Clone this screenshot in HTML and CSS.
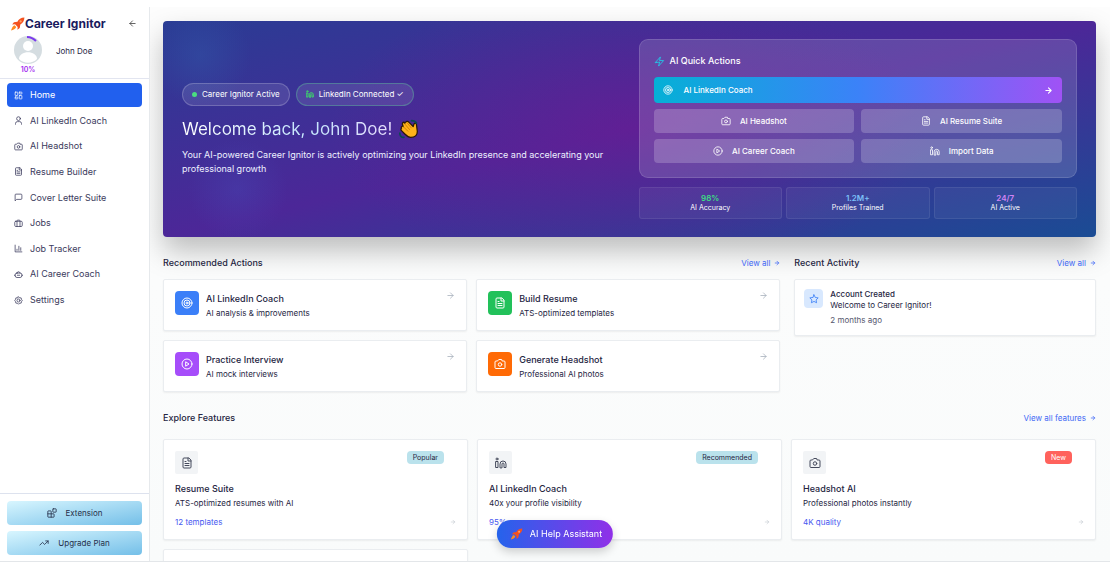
FILE: index.html
```html
<!DOCTYPE html>
<html lang="en">
<head>
    <meta charset="UTF-8">
    <meta name="viewport" content="width=device-width, initial-scale=1.0">
    <title>Career Ignitor</title>
    <link rel="stylesheet" href="styles.css">
</head>
<body>
    <!-- icons -->
    <svg class="sprite" aria-hidden="true">
        <symbol id="i-home" viewBox="0 0 24 24"><rect x="3" y="3" width="7" height="9" rx="1"/><rect x="14" y="3" width="7" height="5" rx="1"/><rect x="14" y="12" width="7" height="9" rx="1"/><rect x="3" y="16" width="7" height="5" rx="1"/></symbol>
        <symbol id="i-user" viewBox="0 0 24 24"><circle cx="12" cy="7" r="5"/><path d="M4 22v-2a5 5 0 0 1 5-5h6a5 5 0 0 1 5 5v2"/></symbol>
        <symbol id="i-camera" viewBox="0 0 24 24"><path d="M14.5 3h-5L7 6H4a2 2 0 0 0-2 2v11a2 2 0 0 0 2 2h16a2 2 0 0 0 2-2V8a2 2 0 0 0-2-2h-3z"/><circle cx="12" cy="13" r="3.500"/></symbol>
        <symbol id="i-file" viewBox="0 0 24 24"><path d="M15 2H6a2 2 0 0 0-2 2v16a2 2 0 0 0 2 2h12a2 2 0 0 0 2-2V7z"/><path d="M14 2v6h6M8 13h8M8 17h8M8 9h2"/></symbol>
        <symbol id="i-message" viewBox="0 0 24 24"><path d="M21 15a2 2 0 0 1-2 2H7l-4 4V5a2 2 0 0 1 2-2h14a2 2 0 0 1 2 2z"/></symbol>
        <symbol id="i-jobs" viewBox="0 0 24 24"><rect x="2" y="6" width="20" height="14" rx="3"/><path d="M8 20V5a2 2 0 0 1 2-2h4a2 2 0 0 1 2 2v15"/></symbol>
        <symbol id="i-chart" viewBox="0 0 24 24"><path d="M3 3v18h18M8 17v-3M13 17V6M18 17V10"/></symbol>
        <symbol id="i-bot" viewBox="0 0 24 24"><rect x="3" y="8" width="18" height="12" rx="5"/><path d="M8 8c0-5 8-5 8 0M1 14h2M21 14h2M9 14h6"/></symbol>
        <symbol id="i-settings" viewBox="0 0 24 24"><path d="M12 2l3 3 4 0 1 4 2 3-2 3-1 4-4 0-3 3-3-3-4 0-1-4-2-3 2-3 1-4 4 0z"/><circle cx="12" cy="12" r="4"/></symbol>
        <symbol id="i-blocks" viewBox="0 0 24 24"><rect x="14" y="2" width="8" height="8" rx="1"/><path d="M10 22V8a1 1 0 0 0-1-1H3a1 1 0 0 0-1 1v13a1 1 0 0 0 1 1h13a1 1 0 0 0 1-1v-6a1 1 0 0 0-1-1H2"/></symbol>
        <symbol id="i-trend" viewBox="0 0 24 24"><path d="M22 7l-8.500 8.500-5-5L2 17M16 7h6v6"/></symbol>
        <symbol id="i-left" viewBox="0 0 24 24"><path d="M12 19l-7-7 7-7M19 12H5"/></symbol>
        <symbol id="i-right" viewBox="0 0 24 24"><path d="M5 12h14M12 5l7 7-7 7"/></symbol>
        <symbol id="i-zap" viewBox="0 0 24 24"><path d="M3 14L14 2l-2 8h9L10 22l2-8z"/></symbol>
        <symbol id="i-target" viewBox="0 0 24 24"><circle cx="12" cy="12" r="10"/><circle cx="12" cy="12" r="6"/><circle cx="12" cy="12" r="2"/></symbol>
        <symbol id="i-play" viewBox="0 0 24 24"><circle cx="12" cy="12" r="10"/><path d="M10 8l6 4-6 4z"/></symbol>
        <symbol id="i-linkedin" viewBox="0 0 24 24"><path d="M2 9h4v12H2zM10 21v-7a6 6 0 0 1 12 0v7h-4v-7a2 2 0 0 0-4 0v7z"/><circle cx="4" cy="4" r="2"/></symbol>
        <symbol id="i-star" viewBox="0 0 24 24"><path d="M12 2l3.100 6.300 6.900 1-5 4.900 1.200 6.800L12 17.800 5.800 21 7 14.200 2 9.300l6.900-1z"/></symbol>
        <symbol id="i-rocket" viewBox="0 0 24 24"><path fill="#f4511e" stroke="none" d="M23 1c-6 0-10 3-12 7L5 9l-3 4 5-.5 4.500 4.500L11 22l4-3 1-6c4-3 7-6 7-12z"/><path fill="#ff8a1f" stroke="none" d="M6 14c-3 1-4 4-6 9 4-1 8-3 9-6z"/><circle cx="16.500" cy="7.500" r="2" fill="#ffa066" stroke="none"/></symbol>
    </svg>

    <div class="app">
        <aside class="sidebar">
            <div class="brand">
                <svg class="icon rocket"><use href="#i-rocket"/></svg>
                <span class="brand-name">Career Ignitor</span>
                <button class="collapse-btn" aria-label="Collapse sidebar"><svg class="icon"><use href="#i-left"/></svg></button>
            </div>
            <div class="profile">
                <div class="avatar">
                    <svg viewBox="0 0 28 28">
                        <circle cx="14" cy="14" r="14" fill="#d5dde1"/>
                        <circle cx="14" cy="10" r="5" fill="#fff"/>
                        <path d="M5 23c0-9 18-9 18 0-5 5-13 5-18 0z" fill="#fff"/>
                        <path d="M13 1a13 13 0 0 1 9 4" fill="none" stroke="#7c3aed" stroke-width="2"/>
                    </svg>
                    <span class="progress">10%</span>
                </div>
                <span class="user-name">John Doe</span>
            </div>
            <nav class="nav">
                <a href="#" class="active"><svg class="icon"><use href="#i-home"/></svg>Home</a>
                <a href="#"><svg class="icon"><use href="#i-user"/></svg>AI LinkedIn Coach</a>
                <a href="#"><svg class="icon"><use href="#i-camera"/></svg>AI Headshot</a>
                <a href="#"><svg class="icon"><use href="#i-file"/></svg>Resume Builder</a>
                <a href="#"><svg class="icon"><use href="#i-message"/></svg>Cover Letter Suite</a>
                <a href="#"><svg class="icon"><use href="#i-jobs"/></svg>Jobs</a>
                <a href="#"><svg class="icon"><use href="#i-chart"/></svg>Job Tracker</a>
                <a href="#"><svg class="icon"><use href="#i-bot"/></svg>AI Career Coach</a>
                <a href="#"><svg class="icon"><use href="#i-settings"/></svg>Settings</a>
            </nav>
            <div class="sidebar-footer">
                <button class="side-btn"><svg class="icon"><use href="#i-blocks"/></svg>Extension</button>
                <button class="side-btn"><svg class="icon"><use href="#i-trend"/></svg>Upgrade Plan</button>
            </div>
        </aside>

        <main class="main">
            <section class="hero">
                <div class="welcome">
                    <div class="pills">
                        <span class="pill"><span class="dot"></span>Career Ignitor Active</span>
                        <span class="pill pill-green"><svg class="icon"><use href="#i-linkedin"/></svg>LinkedIn Connected ✓</span>
                    </div>
                    <h1>
                        <span class="welcome-text">Welcome back, John Doe!</span>
                        <svg class="wave" viewBox="0 0 24 24">
                            <g stroke="#2b1a05" stroke-width="1.500" stroke-linejoin="round">
                                <path fill="#ffb31a" d="M3 11c-1-2 1-3 2-2L4 6c0-2 2-3 3-1l1-1c1-2 3-1 4 0l5 5 1-3c1-2 3-1 3 1l1 8c0 5-4 7-8 7-3 0-5-2-7-4l-4-4c-1-1-1-2 0-3z"/>
                                <path fill="none" stroke="#c97a00" stroke-width="1" d="M5 9l6 6M7 6l6 7M10 5l5 6"/>
                            </g>
                            <path fill="none" stroke="#0b4a50" stroke-width="2" stroke-linecap="round" d="M15 2c3 0 5 1 6 3M1 17c0 3 2 5 5 5"/>
                        </svg>
                    </h1>
                    <p>Your AI-powered Career Ignitor is actively optimizing your LinkedIn presence and accelerating your professional growth</p>
                </div>
                <div class="hero-side">
                    <div class="quick">
                        <h2><svg class="icon zap"><use href="#i-zap"/></svg>AI Quick Actions</h2>
                        <div class="quick-grid">
                            <button class="quick-main"><svg class="icon"><use href="#i-target"/></svg>AI LinkedIn Coach<svg class="icon end"><use href="#i-right"/></svg></button>
                            <button><svg class="icon"><use href="#i-camera"/></svg>AI Headshot</button>
                            <button><svg class="icon"><use href="#i-file"/></svg>AI Resume Suite</button>
                            <button><svg class="icon"><use href="#i-play"/></svg>AI Career Coach</button>
                            <button><svg class="icon"><use href="#i-linkedin"/></svg>Import Data</button>
                        </div>
                    </div>
                    <div class="stats">
                        <div class="stat"><strong class="green">98%</strong><span>AI Accuracy</span></div>
                        <div class="stat"><strong class="blue">1.2M+</strong><span>Profiles Trained</span></div>
                        <div class="stat"><strong class="pink">24/7</strong><span>AI Active</span></div>
                    </div>
                </div>
            </section>

            <div class="columns">
                <section class="recommended">
                    <div class="section-head">
                        <h2>Recommended Actions</h2>
                        <a href="#">View all <svg class="icon"><use href="#i-right"/></svg></a>
                    </div>
                    <div class="action-grid">
                        <a href="#" class="card action">
                            <span class="tile tile-blue"><svg class="icon"><use href="#i-target"/></svg></span>
                            <span class="action-text"><b>AI LinkedIn Coach</b><span>AI analysis &amp; improvements</span></span>
                            <svg class="icon arrow"><use href="#i-right"/></svg>
                        </a>
                        <a href="#" class="card action">
                            <span class="tile tile-green"><svg class="icon"><use href="#i-file"/></svg></span>
                            <span class="action-text"><b>Build Resume</b><span>ATS-optimized templates</span></span>
                            <svg class="icon arrow"><use href="#i-right"/></svg>
                        </a>
                        <a href="#" class="card action">
                            <span class="tile tile-purple"><svg class="icon"><use href="#i-play"/></svg></span>
                            <span class="action-text"><b>Practice Interview</b><span>AI mock interviews</span></span>
                            <svg class="icon arrow"><use href="#i-right"/></svg>
                        </a>
                        <a href="#" class="card action">
                            <span class="tile tile-orange"><svg class="icon"><use href="#i-camera"/></svg></span>
                            <span class="action-text"><b>Generate Headshot</b><span>Professional AI photos</span></span>
                            <svg class="icon arrow"><use href="#i-right"/></svg>
                        </a>
                    </div>
                </section>
                <section>
                    <div class="section-head">
                        <h2>Recent Activity</h2>
                        <a href="#">View all <svg class="icon"><use href="#i-right"/></svg></a>
                    </div>
                    <div class="card activity">
                        <span class="activity-icon"><svg class="icon"><use href="#i-star"/></svg></span>
                        <div>
                            <h3>Account Created</h3>
                            <p>Welcome to Career Ignitor!</p>
                            <time>2 months ago</time>
                        </div>
                    </div>
                </section>
            </div>

            <section class="explore">
                <div class="section-head">
                    <h2>Explore Features</h2>
                    <a href="#">View all features <svg class="icon"><use href="#i-right"/></svg></a>
                </div>
                <div class="feature-grid">
                    <article class="card feature">
                        <div class="feature-top">
                            <span class="feature-icon"><svg class="icon"><use href="#i-file"/></svg></span>
                            <span class="badge">Popular</span>
                        </div>
                        <h3>Resume Suite</h3>
                        <p>ATS-optimized resumes with AI</p>
                        <div class="feature-foot"><a href="#">12 templates</a><svg class="icon"><use href="#i-right"/></svg></div>
                    </article>
                    <article class="card feature">
                        <div class="feature-top">
                            <span class="feature-icon"><svg class="icon"><use href="#i-linkedin"/></svg></span>
                            <span class="badge">Recommended</span>
                        </div>
                        <h3>AI LinkedIn Coach</h3>
                        <p>40x your profile visibility</p>
                        <div class="feature-foot"><a href="#">95% success</a><svg class="icon"><use href="#i-right"/></svg></div>
                    </article>
                    <article class="card feature">
                        <div class="feature-top">
                            <span class="feature-icon"><svg class="icon"><use href="#i-camera"/></svg></span>
                            <span class="badge badge-new">New</span>
                        </div>
                        <h3>Headshot AI</h3>
                        <p>Professional photos instantly</p>
                        <div class="feature-foot"><a href="#">4K quality</a><svg class="icon"><use href="#i-right"/></svg></div>
                    </article>
                    <article class="card feature"></article>
                </div>
            </section>
        </main>
    </div>

    <button class="help-btn"><svg class="icon"><use href="#i-rocket"/></svg>AI Help Assistant</button>
</body>
</html>
```
FILE: styles.css
```css
* {
    margin: 0;
    padding: 0;
    box-sizing: border-box;
}

body {
    font-family: Inter, 'Liberation Sans', sans-serif;
    font-size: 9px;
    line-height: 12px;
    color: #25253f;
    background-color: #fff;
    height: 100vh;
    padding: 7px 0;
    overflow: hidden;
}

a {
    color: inherit;
    text-decoration: none;
}

button {
    font: inherit;
    border: none;
    cursor: pointer;
}

h1, h2, h3 {
    font-size: 9px;
    font-weight: 500;
}

.sprite {
    display: none;
}

.icon {
    width: 10px;
    height: 10px;
    flex: none;
    fill: none;
    stroke: currentColor;
    stroke-width: 2;
    stroke-linecap: round;
    stroke-linejoin: round;
}

.app {
    display: flex;
    height: 100%;
    border-bottom: 1px solid #e3e6e9;
}

/* sidebar */
.sidebar {
    width: 150px;
    flex: none;
    display: flex;
    flex-direction: column;
    border-right: 1px solid #e6e9ec;
    background-color: #fff;
}

.brand {
    display: flex;
    align-items: center;
    height: 29px;
    padding: 4px 12px 0 11px;
}

.brand .rocket {
    width: 14px;
    height: 14px;
}

.brand-name {
    font-size: 12px;
    font-weight: 700;
    color: #1b1b5e;
}

.collapse-btn {
    display: flex;
    margin-left: auto;
    background: none;
    color: #333;
}

.collapse-btn .icon {
    width: 9px;
    height: 9px;
}

.profile {
    display: flex;
    gap: 14px;
    height: 43px;
    padding-left: 14px;
    border-bottom: 1px solid #e2e5f0;
}

.avatar {
    width: 28px;
    text-align: center;
}

.avatar svg {
    display: block;
    width: 28px;
    height: 28px;
}

.progress {
    display: block;
    font-size: 7px;
    font-weight: 600;
    color: #a32af0;
}

.user-name {
    font-size: 8px;
    line-height: 30px;
}

.nav {
    display: flex;
    flex-direction: column;
    justify-content: space-between;
    height: 229px;
    margin: 4px 7px;
}

.nav a {
    display: flex;
    align-items: center;
    gap: 7px;
    height: 24px;
    padding: 0 7px;
    border-radius: 4px;
    color: #3a3a5c;
}

.nav .icon {
    width: 9px;
    height: 9px;
}

.nav .active {
    background-color: #2160ee;
    color: #fff;
}

.sidebar-footer {
    display: flex;
    flex-direction: column;
    gap: 6px;
    margin-top: auto;
    padding: 7px 7px 6px;
    border-top: 1px solid #dde2ee;
}

.side-btn {
    display: flex;
    align-items: center;
    justify-content: center;
    gap: 9px;
    height: 24px;
    border-radius: 4px;
    font-size: 8px;
    color: #25304a;
    background: linear-gradient(to bottom right, #d8f6ff, #74bfe8);
}

/* main area */
.main {
    flex: 1;
    min-width: 0;
    padding: 14px 14px 0 13px;
    overflow: hidden;
    background: linear-gradient(to bottom, #fdfdfd, #f9fbfb);
}

.hero {
    display: grid;
    grid-template-columns: 1fr 1fr;
    align-items: center;
    gap: 18px;
    padding: 18px 19px;
    border-radius: 4px;
    color: #fff;
    background:
        radial-gradient(circle at 4% 16%, rgba(50, 90, 170, 0.4), transparent 50px),
        radial-gradient(circle at 8% 78%, rgba(70, 80, 190, 0.3), transparent 50px),
        radial-gradient(ellipse 300px 150px at 50% 50%, rgba(116, 24, 146, 0.5), transparent),
        linear-gradient(to bottom right, #2a3c94, #4c2798 50%, #1a4c94);
    box-shadow: 0 14px 28px rgba(0, 0, 0, 0.25);
}

.pills {
    display: flex;
    gap: 6px;
    margin-bottom: 11px;
}

.pill {
    display: flex;
    align-items: center;
    gap: 5px;
    height: 23px;
    padding: 0 9px;
    border: 1px solid rgba(255, 255, 255, 0.2);
    border-radius: 12px;
    background-color: rgba(255, 255, 255, 0.1);
    font-size: 8px;
}

.pill .icon {
    width: 8px;
    height: 8px;
    stroke-width: 3;
    color: #3ecf6e;
}

.pill-green {
    border-color: rgba(90, 200, 150, 0.4);
}

.dot {
    width: 5px;
    height: 5px;
    border-radius: 50%;
    background-color: #4ade80;
}

.hero h1 {
    display: flex;
    align-items: center;
    gap: 7px;
    margin-bottom: 7px;
    font-size: 17px;
    font-weight: 400;
    line-height: 24px;
}

.welcome-text {
    background: linear-gradient(to right, #fff, #c4e6fd 60%, #e6dcfc);
    -webkit-background-clip: text;
    background-clip: text;
    color: transparent;
}

.wave {
    width: 20px;
    height: 20px;
}

.welcome p {
    line-height: 14px;
    color: #eef1ff;
}

.quick {
    padding: 14px;
    margin-bottom: 9px;
    border: 1px solid rgba(255, 255, 255, 0.14);
    border-radius: 9px;
    background-color: rgba(255, 255, 255, 0.14);
}

.quick h2 {
    display: flex;
    align-items: center;
    gap: 5px;
    margin-bottom: 9px;
    line-height: 14px;
}

.quick .zap {
    width: 11px;
    height: 11px;
    color: #22c7e8;
}

.quick-grid {
    display: grid;
    grid-template-columns: 1fr 1fr;
    gap: 6px 7px;
}

.quick-grid button {
    display: flex;
    align-items: center;
    justify-content: center;
    gap: 9px;
    height: 24px;
    border-radius: 4px;
    background-color: rgba(255, 255, 255, 0.2);
    color: #fff;
    font-size: 8px;
    font-weight: 500;
}

.quick-grid .quick-main {
    grid-column: span 2;
    justify-content: flex-start;
    gap: 11px;
    height: 26px;
    padding: 0 9px;
    background: linear-gradient(to right, #05b0d6, #3b82f8 50%, #a052f5);
}

.quick-main .end {
    width: 9px;
    height: 9px;
    margin-left: auto;
    stroke-width: 3;
}

.stats {
    display: grid;
    grid-template-columns: repeat(3, 1fr);
    gap: 4px;
}

.stat {
    display: flex;
    flex-direction: column;
    align-items: center;
    justify-content: center;
    height: 32px;
    border: 1px solid rgba(255, 255, 255, 0.08);
    border-radius: 3px;
    background-color: rgba(255, 255, 255, 0.05);
    font-size: 7px;
    line-height: 10px;
}

.stat strong {
    font-size: 8px;
    font-weight: 600;
}

.green {
    color: #3ddc84;
}

.blue {
    color: #7cc0f8;
}

.pink {
    color: #d184f5;
}

/* sections */
.section-head {
    display: flex;
    align-items: center;
    justify-content: space-between;
    height: 14px;
    margin-bottom: 9px;
}

.section-head a {
    display: flex;
    align-items: center;
    gap: 4px;
    font-size: 8px;
    color: #4169f5;
}

.section-head .icon {
    width: 6px;
    height: 6px;
    stroke-width: 3;
}

.columns {
    display: grid;
    grid-template-columns: repeat(3, 1fr);
    gap: 14px;
    margin-top: 19px;
}

.recommended {
    grid-column: span 2;
}

.card {
    background-color: #fff;
    border: 1px solid #eaedf0;
    border-radius: 2px;
    box-shadow: 0 1px 2px rgba(0, 0, 0, 0.06);
}

.action-grid {
    display: grid;
    grid-template-columns: 1fr 1fr;
    gap: 9px;
}

.action {
    display: flex;
    align-items: flex-start;
    gap: 7px;
    height: 52px;
    padding: 11px;
}

.tile {
    display: flex;
    align-items: center;
    justify-content: center;
    width: 24px;
    height: 24px;
    border-radius: 4px;
    color: #fff;
}

.tile .icon {
    width: 12px;
    height: 12px;
}

.tile-blue {
    background-color: #3b7ff8;
}

.tile-green {
    background-color: #22c15a;
}

.tile-purple {
    background-color: #a64dfa;
}

.tile-orange {
    background-color: #ff6a05;
}

.action-text {
    display: flex;
    flex-direction: column;
    flex: 1;
    line-height: 15px;
    font-size: 8px;
}

.action-text b {
    font-size: 9px;
    font-weight: 500;
}

.arrow {
    width: 9px;
    height: 9px;
    color: #a3acb8;
}

.activity {
    display: flex;
    gap: 7px;
    padding: 9px;
    font-size: 8px;
    line-height: 11px;
}

.activity-icon {
    display: flex;
    align-items: center;
    justify-content: center;
    width: 19px;
    height: 19px;
    border-radius: 4px;
    background-color: #d8e8fe;
    color: #3b7ff8;
}

.activity h3 {
    font-size: 8px;
}

.activity time {
    display: block;
    margin-top: 4px;
    color: #55566e;
}

.explore {
    margin-top: 19px;
}

.explore .section-head {
    margin-bottom: 14px;
}

.feature-grid {
    display: grid;
    grid-template-columns: repeat(3, 1fr);
    gap: 9px;
}

.feature {
    min-height: 101px;
    padding: 11px;
}

.feature-top {
    display: flex;
    align-items: flex-start;
    justify-content: space-between;
    margin-bottom: 8px;
}

.feature-icon {
    display: flex;
    align-items: center;
    justify-content: center;
    width: 23px;
    height: 23px;
    border-radius: 2px;
    background-color: #f2f4f6;
    color: #454a5c;
}

.feature-icon .icon {
    width: 12px;
    height: 12px;
}

.badge {
    margin-right: 12px;
    padding: 0 6px;
    border-radius: 4px;
    background-color: #bae2ec;
    font-size: 7px;
    line-height: 13px;
}

.badge-new {
    background-color: #ff625c;
    color: #fff;
}

.feature h3 {
    line-height: 14px;
}

.feature p {
    font-size: 8px;
    line-height: 15px;
}

.feature-foot {
    display: flex;
    align-items: center;
    justify-content: space-between;
    margin-top: 5px;
    font-size: 8px;
    color: #b5bcc4;
}

.feature-foot a {
    color: #4758f0;
}

.feature-foot .icon {
    width: 6px;
    height: 6px;
}

.help-btn {
    position: fixed;
    bottom: 21px;
    left: 50%;
    transform: translateX(-50%);
    display: flex;
    align-items: center;
    gap: 7px;
    height: 28px;
    padding: 0 11px 0 14px;
    border-radius: 14px;
    background: linear-gradient(to right, #2563eb, #9030e8);
    box-shadow: 0 4px 10px rgba(0, 0, 0, 0.18);
    color: #fff;
    white-space: nowrap;
}

.help-btn .icon {
    width: 12px;
    height: 12px;
}
```
